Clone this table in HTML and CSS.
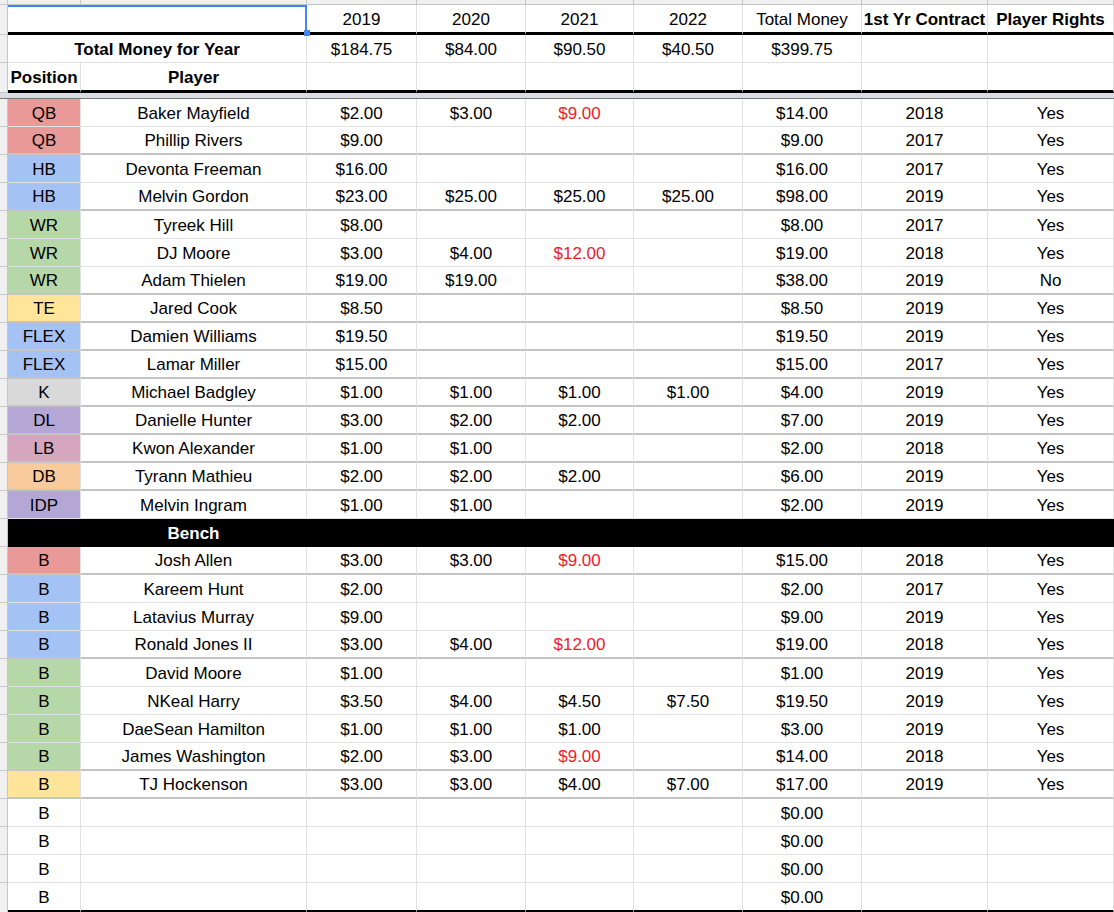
FILE: index.html
```html
<!DOCTYPE html>
<html>
<head>
<meta charset="utf-8">
<title>Roster Contracts</title>
<link rel="stylesheet" href="styles.css">
</head>
<body>
<div class="sheet">
  <div class="row colhead">
    <div class="g"></div><div class="ch"></div><div class="ch"></div><div class="ch"></div><div class="ch"></div><div class="ch"></div><div class="ch"></div><div class="ch"></div><div class="ch"></div><div class="ch"></div>
  </div>
  <div class="row head thick">
    <div class="g"></div><div class="c span2 sel"></div><div class="c">2019</div><div class="c">2020</div><div class="c">2021</div><div class="c">2022</div><div class="c">Total Money</div><div class="c b">1st Yr Contract</div><div class="c b">Player Rights</div>
  </div>
  <div class="row">
    <div class="g"></div><div class="c span2 b">Total Money for Year</div><div class="c">$184.75</div><div class="c">$84.00</div><div class="c">$90.50</div><div class="c">$40.50</div><div class="c">$399.75</div><div class="c"></div><div class="c"></div>
  </div>
  <div class="row head thick">
    <div class="g"></div><div class="c b">Position</div><div class="c b">Player</div><div class="c"></div><div class="c"></div><div class="c"></div><div class="c"></div><div class="c"></div><div class="c"></div><div class="c"></div>
  </div>
  <div class="band"></div>

  <div class="row"><div class="g"></div><div class="c qb">QB</div><div class="c">Baker Mayfield</div><div class="c">$2.00</div><div class="c">$3.00</div><div class="c red">$9.00</div><div class="c"></div><div class="c">$14.00</div><div class="c">2018</div><div class="c">Yes</div></div>
  <div class="row grp"><div class="g"></div><div class="c qb">QB</div><div class="c">Phillip Rivers</div><div class="c">$9.00</div><div class="c"></div><div class="c"></div><div class="c"></div><div class="c">$9.00</div><div class="c">2017</div><div class="c">Yes</div></div>
  <div class="row"><div class="g"></div><div class="c rb">HB</div><div class="c">Devonta Freeman</div><div class="c">$16.00</div><div class="c"></div><div class="c"></div><div class="c"></div><div class="c">$16.00</div><div class="c">2017</div><div class="c">Yes</div></div>
  <div class="row grp"><div class="g"></div><div class="c rb">HB</div><div class="c">Melvin Gordon</div><div class="c">$23.00</div><div class="c">$25.00</div><div class="c">$25.00</div><div class="c">$25.00</div><div class="c">$98.00</div><div class="c">2019</div><div class="c">Yes</div></div>
  <div class="row"><div class="g"></div><div class="c wr">WR</div><div class="c">Tyreek Hill</div><div class="c">$8.00</div><div class="c"></div><div class="c"></div><div class="c"></div><div class="c">$8.00</div><div class="c">2017</div><div class="c">Yes</div></div>
  <div class="row"><div class="g"></div><div class="c wr">WR</div><div class="c">DJ Moore</div><div class="c">$3.00</div><div class="c">$4.00</div><div class="c red">$12.00</div><div class="c"></div><div class="c">$19.00</div><div class="c">2018</div><div class="c">Yes</div></div>
  <div class="row grp"><div class="g"></div><div class="c wr">WR</div><div class="c">Adam Thielen</div><div class="c">$19.00</div><div class="c">$19.00</div><div class="c"></div><div class="c"></div><div class="c">$38.00</div><div class="c">2019</div><div class="c">No</div></div>
  <div class="row grp"><div class="g"></div><div class="c te">TE</div><div class="c">Jared Cook</div><div class="c">$8.50</div><div class="c"></div><div class="c"></div><div class="c"></div><div class="c">$8.50</div><div class="c">2019</div><div class="c">Yes</div></div>
  <div class="row grp"><div class="g"></div><div class="c rb">FLEX</div><div class="c">Damien Williams</div><div class="c">$19.50</div><div class="c"></div><div class="c"></div><div class="c"></div><div class="c">$19.50</div><div class="c">2019</div><div class="c">Yes</div></div>
  <div class="row grp"><div class="g"></div><div class="c rb">FLEX</div><div class="c">Lamar Miller</div><div class="c">$15.00</div><div class="c"></div><div class="c"></div><div class="c"></div><div class="c">$15.00</div><div class="c">2017</div><div class="c">Yes</div></div>
  <div class="row grp"><div class="g"></div><div class="c k">K</div><div class="c">Michael Badgley</div><div class="c">$1.00</div><div class="c">$1.00</div><div class="c">$1.00</div><div class="c">$1.00</div><div class="c">$4.00</div><div class="c">2019</div><div class="c">Yes</div></div>
  <div class="row grp"><div class="g"></div><div class="c dl">DL</div><div class="c">Danielle Hunter</div><div class="c">$3.00</div><div class="c">$2.00</div><div class="c">$2.00</div><div class="c"></div><div class="c">$7.00</div><div class="c">2019</div><div class="c">Yes</div></div>
  <div class="row grp"><div class="g"></div><div class="c lb">LB</div><div class="c">Kwon Alexander</div><div class="c">$1.00</div><div class="c">$1.00</div><div class="c"></div><div class="c"></div><div class="c">$2.00</div><div class="c">2018</div><div class="c">Yes</div></div>
  <div class="row grp"><div class="g"></div><div class="c db">DB</div><div class="c">Tyrann Mathieu</div><div class="c">$2.00</div><div class="c">$2.00</div><div class="c">$2.00</div><div class="c"></div><div class="c">$6.00</div><div class="c">2019</div><div class="c">Yes</div></div>
  <div class="row"><div class="g"></div><div class="c dl">IDP</div><div class="c">Melvin Ingram</div><div class="c">$1.00</div><div class="c">$1.00</div><div class="c"></div><div class="c"></div><div class="c">$2.00</div><div class="c">2019</div><div class="c">Yes</div></div>

  <div class="row bench"><div class="g"></div><div class="c"></div><div class="c b">Bench</div><div class="c"></div><div class="c"></div><div class="c"></div><div class="c"></div><div class="c"></div><div class="c"></div><div class="c"></div></div>

  <div class="row grp"><div class="g"></div><div class="c qb">B</div><div class="c">Josh Allen</div><div class="c">$3.00</div><div class="c">$3.00</div><div class="c red">$9.00</div><div class="c"></div><div class="c">$15.00</div><div class="c">2018</div><div class="c">Yes</div></div>
  <div class="row"><div class="g"></div><div class="c rb">B</div><div class="c">Kareem Hunt</div><div class="c">$2.00</div><div class="c"></div><div class="c"></div><div class="c"></div><div class="c">$2.00</div><div class="c">2017</div><div class="c">Yes</div></div>
  <div class="row"><div class="g"></div><div class="c rb">B</div><div class="c">Latavius Murray</div><div class="c">$9.00</div><div class="c"></div><div class="c"></div><div class="c"></div><div class="c">$9.00</div><div class="c">2019</div><div class="c">Yes</div></div>
  <div class="row grp"><div class="g"></div><div class="c rb">B</div><div class="c">Ronald Jones II</div><div class="c">$3.00</div><div class="c">$4.00</div><div class="c red">$12.00</div><div class="c"></div><div class="c">$19.00</div><div class="c">2018</div><div class="c">Yes</div></div>
  <div class="row"><div class="g"></div><div class="c wr">B</div><div class="c">David Moore</div><div class="c">$1.00</div><div class="c"></div><div class="c"></div><div class="c"></div><div class="c">$1.00</div><div class="c">2019</div><div class="c">Yes</div></div>
  <div class="row"><div class="g"></div><div class="c wr">B</div><div class="c">NKeal Harry</div><div class="c">$3.50</div><div class="c">$4.00</div><div class="c">$4.50</div><div class="c">$7.50</div><div class="c">$19.50</div><div class="c">2019</div><div class="c">Yes</div></div>
  <div class="row"><div class="g"></div><div class="c wr">B</div><div class="c">DaeSean Hamilton</div><div class="c">$1.00</div><div class="c">$1.00</div><div class="c">$1.00</div><div class="c"></div><div class="c">$3.00</div><div class="c">2019</div><div class="c">Yes</div></div>
  <div class="row grp"><div class="g"></div><div class="c wr">B</div><div class="c">James Washington</div><div class="c">$2.00</div><div class="c">$3.00</div><div class="c red">$9.00</div><div class="c"></div><div class="c">$14.00</div><div class="c">2018</div><div class="c">Yes</div></div>
  <div class="row grp"><div class="g"></div><div class="c te">B</div><div class="c">TJ Hockenson</div><div class="c">$3.00</div><div class="c">$3.00</div><div class="c">$4.00</div><div class="c">$7.00</div><div class="c">$17.00</div><div class="c">2019</div><div class="c">Yes</div></div>
  <div class="row"><div class="g"></div><div class="c">B</div><div class="c"></div><div class="c"></div><div class="c"></div><div class="c"></div><div class="c"></div><div class="c">$0.00</div><div class="c"></div><div class="c"></div></div>
  <div class="row"><div class="g"></div><div class="c">B</div><div class="c"></div><div class="c"></div><div class="c"></div><div class="c"></div><div class="c"></div><div class="c">$0.00</div><div class="c"></div><div class="c"></div></div>
  <div class="row"><div class="g"></div><div class="c">B</div><div class="c"></div><div class="c"></div><div class="c"></div><div class="c"></div><div class="c"></div><div class="c">$0.00</div><div class="c"></div><div class="c"></div></div>
  <div class="row head thick"><div class="g"></div><div class="c">B</div><div class="c"></div><div class="c"></div><div class="c"></div><div class="c"></div><div class="c"></div><div class="c">$0.00</div><div class="c"></div><div class="c"></div></div>
</div>
</body>
</html>
```

FILE: styles.css
```css
html, body {
  margin: 0;
  padding: 0;
  background: #ffffff;
  overflow: hidden;
}

body {
  font-family: "Liberation Sans", Arial, sans-serif;
  font-size: 17px;
  color: #000000;
}

.sheet {
  width: 1114px;
}

.row {
  display: grid;
  grid-template-columns: 8px 73px 226px 110px 109px 108px 109px 119px 126px 126px;
  height: 28px;
}

.row.colhead {
  height: 5px;
}

.row.head {
  height: 30px;
}

.g {
  box-sizing: border-box;
  background: #f1f1f1;
  border-right: 1px solid #c6c6c6;
  border-bottom: 1px solid #c6c6c6;
}

.ch {
  box-sizing: border-box;
  background: #f1f1f1;
  border-right: 1px solid #c6c6c6;
  border-bottom: 1px solid #c6c6c6;
}

.c {
  box-sizing: border-box;
  padding-top: 2px;
  border-right: 1px solid #e2e2e2;
  border-bottom: 1px solid #e2e2e2;
  display: flex;
  align-items: center;
  justify-content: center;
  white-space: nowrap;
  overflow: visible;
  min-width: 0;
}

.span2 {
  grid-column: span 2;
}

.b {
  font-weight: bold;
}

.red {
  color: #ee1c2a;
}

.thick .c {
  border-bottom: 3px solid #000000;
}

.grp .c {
  border-bottom: 2px solid #c4c4c4;
}

.band {
  box-sizing: border-box;
  height: 6px;
  background: #d9dce1;
  border-bottom: 1px solid #767676;
}

/* selection of the first merged cell */
.sel {
  position: relative;
}

.sel::before {
  content: "";
  position: absolute;
  left: 0;
  top: 0;
  right: -1px;
  bottom: 0;
  border-top: 2px solid #4285f4;
  border-right: 2px solid #4285f4;
}

.sel::after {
  content: "";
  position: absolute;
  right: -4px;
  bottom: -4px;
  width: 6px;
  height: 6px;
  background: #4285f4;
}

/* position colours */
.qb { background: #ea9999; }
.rb { background: #a4c2f4; }
.wr { background: #b6d7a8; }
.te { background: #ffe599; }
.k  { background: #d9d9d9; }
.dl { background: #b4a7d6; }
.lb { background: #d5a6bd; }
.db { background: #f9cb9c; }

/* bench divider */
.bench .c {
  background: #000000;
  color: #ffffff;
  border-right-color: #000000;
  border-bottom-color: #000000;
}
```
